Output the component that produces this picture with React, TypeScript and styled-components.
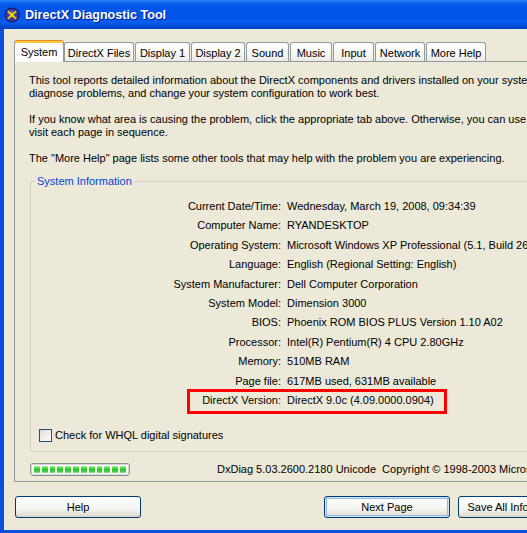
import React from "react";
import styled, { createGlobalStyle } from "styled-components";

const GlobalStyle = createGlobalStyle`
  html, body {
    margin: 0;
    padding: 0;
    overflow: hidden;
    background: #ece9d8;
  }
  body {
    font-family: "Liberation Sans", Arial, sans-serif;
    font-size: 11px;
    color: #000;
  }
`;

const Window = styled.div`
  width: 760px;
  height: 533px;
  display: flex;
  flex-direction: column;
  background: #ece9d8;
`;

const TitleBar = styled.div`
  height: 29px;
  flex: none;
  display: flex;
  align-items: center;
  gap: 5px;
  padding-left: 4px;
  background: linear-gradient(
    #2b87f7 0,
    #0a63ef 3px,
    #0056e8 6px,
    #0055e6 18px,
    #0a5ff0 22px,
    #0050dd 25px,
    #003fbf 29px
  );
`;

const TitleText = styled.span`
  font-family: "Liberation Sans", Arial, sans-serif;
  font-weight: bold;
  font-size: 12.6px;
  line-height: 16px;
  padding-top: 1px;
  color: #fff;
  text-shadow: 1px 1px 0 #0a1a8a;
`;

const Frame = styled.div`
  flex: 1;
  display: flex;
  flex-direction: column;
  border-left: 4px solid #0a4fe0;
  border-bottom: 3px solid #0a4fe0;
  padding: 11px 0 0 10px;
`;

const TabStrip = styled.div`
  display: flex;
  align-items: flex-end;
  height: 21px;
  position: relative;
  z-index: 1;
`;

const Tab = styled.div<{ $width: number; $active?: boolean }>`
  box-sizing: border-box;
  width: ${(p) => p.$width}px;
  height: ${(p) => (p.$active ? 22 : 19)}px;
  margin-bottom: ${(p) => (p.$active ? -1 : 0)}px;
  margin-right: ${(p) => (p.$active ? 0 : 1)}px;
  display: flex;
  align-items: center;
  justify-content: center;
  padding-top: ${(p) => (p.$active ? 1 : 1)}px;
  border: 1px solid #919b9c;
  border-bottom: none;
  border-radius: 3px 3px 0 0;
  border-top-color: ${(p) => (p.$active ? "#e68b2c" : "#919b9c")};
  box-shadow: ${(p) => (p.$active ? "inset 0 2px 0 #ffc83c" : "none")};
  background: ${(p) =>
    p.$active
      ? "#fcfcfe"
      : "linear-gradient(#ffffff, #f8f8f5 50%, #ecebe6)"};
  white-space: nowrap;
`;

const Panel = styled.div`
  box-sizing: border-box;
  height: 421px;
  flex: none;
  display: flex;
  flex-direction: column;
  border: 1px solid #919b9c;
  padding: 12px 0 5px 14px;
  background: #ece9d8;
`;

const Para = styled.p`
  margin: 0 0 13px;
  line-height: 13px;
  white-space: nowrap;
  &:last-of-type {
    margin-bottom: 10px;
  }
`;

const GroupBox = styled.fieldset`
  margin: 0 0 0 1px;
  padding: 9px 0 9px 0;
  min-width: 0;
  border: 1px solid #d0d0bf;
  border-radius: 3px;
`;

const GroupTitle = styled.legend`
  margin-left: 4px;
  padding: 0 2px;
  line-height: 13px;
  color: #0046d5;
`;

const InfoGrid = styled.div`
  display: grid;
  grid-template-columns: 250px 1fr;
  column-gap: 6px;
`;

const InfoRow = styled.div`
  display: contents;
`;

const Label = styled.div`
  text-align: right;
  line-height: 19.4px;
  white-space: nowrap;
`;

const Value = styled.div`
  line-height: 19.4px;
  white-space: nowrap;
  position: relative;
`;

const Highlight = styled.div`
  position: absolute;
  left: -100px;
  top: -2px;
  width: 260px;
  height: 25px;
  box-sizing: border-box;
  border: 3px solid #ff0000;
  pointer-events: none;
`;

const CheckRow = styled.label`
  display: flex;
  align-items: center;
  gap: 3px;
  margin: 19px 0 0 8px;
  line-height: 13px;
`;

const CheckBox = styled.span`
  box-sizing: border-box;
  width: 13px;
  height: 13px;
  border: 1px solid #1c5180;
  background: linear-gradient(135deg, #dcdcd7, #ffffff);
`;

const StatusRow = styled.div`
  margin-top: auto;
  display: flex;
  align-items: center;
  gap: 87px;
  padding-left: 1px;
`;

const Progress = styled.div`
  box-sizing: border-box;
  width: 100px;
  height: 13px;
  display: flex;
  gap: 2px;
  padding: 2px 3px;
  border: 1px solid #8e8f8f;
  border-radius: 3px;
  background: #fff;
  box-shadow: inset 0 0 0 1px #d6d6d6;
`;

const ProgressBlock = styled.span`
  width: 6px;
  height: 100%;
  background: linear-gradient(#a9f09f, #2bd32b 40%, #2ec22e 70%, #8be58b);
`;

const StatusText = styled.span`
  white-space: pre;
  line-height: 13px;
`;

const ButtonBar = styled.div`
  display: flex;
  margin-top: 14px;
  padding-left: 1px;
`;

const Button = styled.button<{ $default?: boolean }>`
  box-sizing: border-box;
  width: 126px;
  height: 22px;
  margin-right: 8px;
  padding: 0;
  font: inherit;
  color: #000;
  border: 1px solid #003c74;
  border-radius: 3px;
  background: linear-gradient(#ffffff, #f4f4f0 60%, #e3e0d6 90%, #d6d0c5);
  box-shadow: ${(p) =>
    p.$default
      ? "inset 0 0 0 1px #cee7ff, inset 0 0 0 2px #98b8ea"
      : "none"};
  &:first-child {
    margin-right: 183px;
  }
`;

const tabs = [
  { name: "System", width: 50 },
  { name: "DirectX Files", width: 70 },
  { name: "Display 1", width: 55 },
  { name: "Display 2", width: 54 },
  { name: "Sound", width: 43 },
  { name: "Music", width: 42 },
  { name: "Input", width: 41 },
  { name: "Network", width: 50 },
  { name: "More Help", width: 60 },
];

const info = [
  ["Current Date/Time:", "Wednesday, March 19, 2008, 09:34:39"],
  ["Computer Name:", "RYANDESKTOP"],
  ["Operating System:", "Microsoft Windows XP Professional (5.1, Build 2600)"],
  ["Language:", "English (Regional Setting: English)"],
  ["System Manufacturer:", "Dell Computer Corporation"],
  ["System Model:", "Dimension 3000"],
  ["BIOS:", "Phoenix ROM BIOS PLUS Version 1.10 A02"],
  ["Processor:", "Intel(R) Pentium(R) 4 CPU 2.80GHz"],
  ["Memory:", "510MB RAM"],
  ["Page file:", "617MB used, 631MB available"],
  ["DirectX Version:", "DirectX 9.0c (4.09.0000.0904)"],
];

function DxIcon() {
  return (
    <svg width="16" height="16" viewBox="0 0 16 16">
      <circle cx="8" cy="8" r="7.5" fill="#1e1a6e" />
      <circle cx="8" cy="8" r="6.3" fill="#3a34a6" />
      <circle cx="6.5" cy="5.8" r="3" fill="#6d68d6" opacity="0.6" />
      <path
        d="M4.3 3.8 L8 6.6 L11.7 3.8 L12.6 4.8 L9.3 8 L12.6 11.2 L11.7 12.2 L8 9.4 L4.3 12.2 L3.4 11.2 L6.7 8 L3.4 4.8 Z"
        fill="#ffe400"
        stroke="#b89a00"
        strokeWidth="0.5"
      />
    </svg>
  );
}

export default function App() {
  return (
    <>
      <GlobalStyle />
      <Window>
        <TitleBar>
          <DxIcon />
          <TitleText>DirectX Diagnostic Tool</TitleText>
        </TitleBar>
        <Frame>
          <TabStrip>
            {tabs.map((t, i) => (
              <Tab key={t.name} $width={t.width} $active={i === 0}>
                {t.name}
              </Tab>
            ))}
          </TabStrip>
          <Panel>
            <Para>
              This tool reports detailed information about the DirectX components and drivers installed on your system.  It lets you test functionality,
              <br />
              diagnose problems, and change your system configuration to work best.
            </Para>
            <Para>
              If you know what area is causing the problem, click the appropriate tab above.  Otherwise, you can use the "Next Page" button below to
              <br />
              visit each page in sequence.
            </Para>
            <Para>
              The "More Help" page lists some other tools that may help with the problem you are experiencing.
            </Para>
            <GroupBox>
              <GroupTitle>System Information</GroupTitle>
              <InfoGrid>
                {info.map(([label, value]) => (
                  <InfoRow key={label}>
                    <Label>{label}</Label>
                    <Value>
                      {label === "DirectX Version:" && <Highlight />}
                      {value}
                    </Value>
                  </InfoRow>
                ))}
              </InfoGrid>
              <CheckRow>
                <CheckBox />
                Check for WHQL digital signatures
              </CheckRow>
            </GroupBox>
            <StatusRow>
              <Progress>
                {Array.from({ length: 12 }).map((_, i) => (
                  <ProgressBlock key={i} />
                ))}
              </Progress>
              <StatusText>
                DxDiag 5.03.2600.2180 Unicode  Copyright © 1998-2003 Microsoft Corporation.  All rights reserved.
              </StatusText>
            </StatusRow>
          </Panel>
          <ButtonBar>
            <Button>Help</Button>
            <Button $default>Next Page</Button>
            <Button>Save All Information...</Button>
            <Button>Exit</Button>
          </ButtonBar>
        </Frame>
      </Window>
    </>
  );
}
